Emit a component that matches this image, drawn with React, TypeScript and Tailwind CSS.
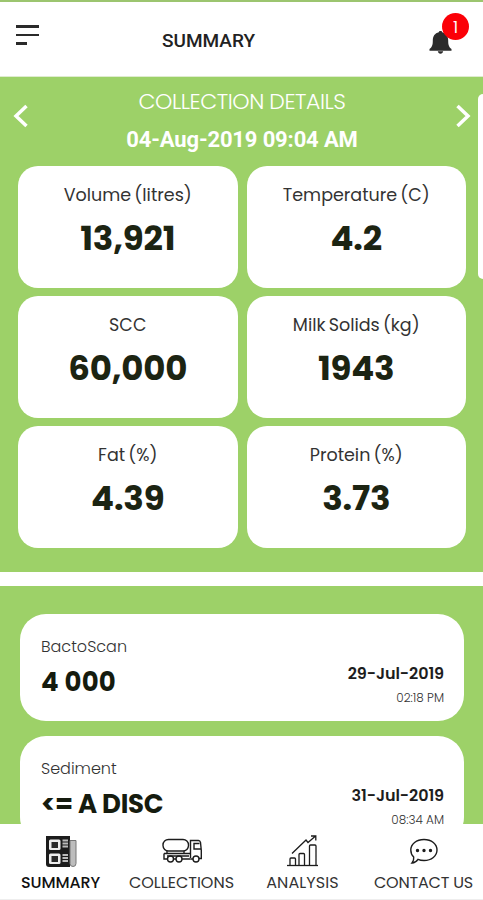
import type { JSX } from 'react';
import { twMerge } from 'tailwind-merge';

type Metric = {
	label: string;
	value: string;
};

const metrics: Metric[] = [
	{ label: 'Volume (litres)', value: '13,921' },
	{ label: 'Temperature (C)', value: '4.2' },
	{ label: 'SCC', value: '60,000' },
	{ label: 'Milk Solids (kg)', value: '1943' },
	{ label: 'Fat (%)', value: '4.39' },
	{ label: 'Protein (%)', value: '3.73' },
];

type TestResult = {
	name: string;
	value: string;
	date: string;
	time: string;
	valueClassName?: string;
};

const results: TestResult[] = [
	{
		name: 'BactoScan',
		value: '4 000',
		date: '29-Jul-2019',
		time: '02:18 PM',
		valueClassName: 'tracking-[0.2px]',
	},
	{
		name: 'Sediment',
		value: '<= A DISC',
		date: '31-Jul-2019',
		time: '08:34 AM',
		valueClassName: 'tracking-[-0.3px]',
	},
];

const SummaryIcon = () => (
	<svg width="31" height="31" viewBox="0 0 31 31" fill="none" className="ml-px">
		<path d="M0 0h24v31H3a3 3 0 0 1-3-3z" fill="#1c1c1c" />
		<rect x="3" y="3.5" width="11.5" height="10.5" rx="1.5" fill="#eee" />
		<rect x="5.500" y="6" width="6.500" height="6" fill="#2a2a2a" />
		<rect x="3" y="17.5" width="11.5" height="10.5" rx="1.5" fill="#eee" />
		<rect x="5.500" y="20" width="6.500" height="6" fill="#2a2a2a" />
		<path d="M16.500 4.500h5.500M16.500 7.500h5.500M16.500 10.500h5.500M16.500 19h5.500M16.500 22h5.500M16.500 25h5.500" stroke="#bbb" strokeWidth="2" />
		<path d="M24 4.500h6v23a3 3 0 0 1-6 0z" fill="#bdbdbd" stroke="#777" />
	</svg>
);

const TruckIcon = () => (
	<svg width="40" height="26" viewBox="0 0 40 26" fill="none" stroke="#1c1c1c" strokeWidth="1.4">
		<rect x="1" y="1.500" width="25.500" height="11.500" rx="5.500" />
		<path d="M2 15.500h26M28.500 20V2.500h8q1.500 0 2 2l.8 8v8H37M5 13v2.500M22 13v2.500M5.500 21H2v-5.500M28.500 21H31" />
		<path d="M37.500 5.500H32v5.500h7" />
		<circle cx="8.500" cy="21" r="3" />
		<circle cx="17" cy="21" r="3" />
		<circle cx="34" cy="21" r="3" />
		<path d="M11.500 21H14M20 21h8.500M5 18h22" />
	</svg>
);

const ChartIcon = () => (
	<svg width="31" height="32" viewBox="0 0 31 32" fill="none" stroke="#1c1c1c" strokeWidth="1.3">
		<path d="M0 30.500h31" />
		<path d="M3 30v-6q0-1 1-1h3.500q1 0 1 1v6M12 30V19.500q0-1 1-1h3.500q1 0 1 1V30M22.500 30V11q0-1 1-1H28q1 0 1 1v19" />
		<path d="M5 18.500 19 5l2 2.500 7-6M24 1h4.800v4.500" />
	</svg>
);

const ChatIcon = () => (
	<svg width="30" height="27" viewBox="0 0 30 27" fill="none" stroke="#1c1c1c" strokeWidth="1.400">
		<path d="M15 1.500c7.500 0 13 4.500 13 10.500s-5.500 10.500-13 10.500c-2.300 0-4.300-.4-6-1.200-1.500 2.200-3.500 3.500-6 3.700 1.400-1.700 2-3.600 1.700-6C2.800 17.200 1.800 14.800 1.800 12 1.800 6 7.500 1.500 15 1.500z" />
		<circle cx="8.500" cy="12.500" r="1" fill="#1c1c1c" />
		<circle cx="15" cy="12.500" r="1" fill="#1c1c1c" />
		<circle cx="21.500" cy="12.500" r="1" fill="#1c1c1c" />
	</svg>
);

const tabs = [
	{ label: 'SUMMARY', icon: <SummaryIcon />, className: 'font-medium text-[#111] tracking-[-0.1px]' },
	{ label: 'COLLECTIONS', icon: <TruckIcon />, className: '' },
	{ label: 'ANALYSIS', icon: <ChartIcon />, className: 'tracking-[0.1px]' },
	{ label: 'CONTACT US', icon: <ChatIcon />, className: 'tracking-[-0.2px]' },
];

const Header = () => (
	<header className="flex h-[77px] shrink-0 items-start border-t-2 border-b border-t-[#9cc56f] border-b-[#dfeccf] bg-white pr-[14px] pl-4">
		<button type="button" aria-label="Menu" className="mt-[23px] flex flex-col gap-[6px]">
			<span className="h-[2.500px] w-[23px] bg-[#2a2a2a]" />
			<span className="h-[2.500px] w-[23px] bg-[#2a2a2a]" />
			<span className="h-[2.500px] w-[11px] bg-[#2a2a2a]" />
		</button>
		<h1 className="mt-[26px] ml-[123px] font-[Roboto] text-[19px] leading-[26px] font-medium text-[#222]">
			SUMMARY
		</h1>
		<div className="relative mt-[11px] ml-auto h-10 w-10">
			<svg width="23" height="23" viewBox="0 0 23 23" fill="#2b2b2b" className="mt-[18px]">
				<path d="M11.500 0c1 0 1.600.5 1.700 1.300 3.900.9 6 4 6 8.200 0 4.500.6 6.300 3.300 8.500v1.700H.5V18c2.700-2.200 3.300-4 3.300-8.500 0-4.200 2.100-7.300 6-8.200C9.900.5 10.500 0 11.500 0zM8.800 20.200h5.400c-.3 1.500-1.300 2.500-2.700 2.500s-2.400-1-2.700-2.500z" />
			</svg>
			<span className="absolute top-0 right-0 flex size-[27px] items-center justify-center rounded-full bg-[#fb0007] pt-0.5 text-base text-white">
				1
			</span>
		</div>
	</header>
);

const MetricCard = ({ label, value }: Metric) => (
	<div className="flex h-[122px] flex-col items-center rounded-[20px] bg-white pt-[17px]">
		<span className="text-[17.5px] leading-6 text-[#333] [word-spacing:-1.5px]">{label}</span>
		<span className="mt-[11px] text-[34px] leading-10 font-bold tracking-[-0.2px] text-[#1c2412]">{value}</span>
	</div>
);

const CollectionDetails = () => (
	<section className="flex h-[495px] shrink-0 flex-col bg-[#9dd168] pt-3">
		<div className="relative flex h-[77px] shrink-0 items-start justify-between pr-3 pl-[13px]">
			<svg width="16" height="24" viewBox="0 0 16 24" fill="none" stroke="#fff" strokeWidth="3.500" className="mt-[15px]">
				<path d="M13.500 2 3 12l10.500 10" />
			</svg>
			<div className="flex flex-col items-center text-white">
				<h2 className="text-[22px] leading-[26px] font-light tracking-[-0.45px]">COLLECTION DETAILS</h2>
				<p className="mt-3 font-[Roboto] text-[22px] leading-[26px] font-bold tracking-[-0.15px]">
					04-Aug-2019 09:04 AM
				</p>
			</div>
			<svg width="16" height="24" viewBox="0 0 16 24" fill="none" stroke="#fff" strokeWidth="3.500" className="mt-[15px]">
				<path d="M2.500 2 13 12 2.500 22" />
			</svg>
			{/* edge of the next collection, peeking in from the right */}
			<div className="absolute top-[5px] right-0 h-[185px] w-[5px] rounded-l-[5px] bg-white" />
		</div>
		<div className="grid grid-cols-2 gap-x-[9px] gap-y-2 pr-[17px] pl-[18px]">
			{metrics.map((metric) => (
				<MetricCard key={metric.label} {...metric} />
			))}
		</div>
	</section>
);

const ResultCard = ({ name, value, date, time, valueClassName }: TestResult) => (
	<div className="flex h-[107px] shrink-0 items-start justify-between rounded-[26px] bg-white pr-5 pl-[21px]">
		<div className="flex flex-col pt-[21px]">
			<span className="text-base leading-6 font-light text-[#333]">{name}</span>
			<span className={twMerge('mt-[7px] text-[26px] leading-8 font-bold text-[#151b0e]', valueClassName)}>
				{value}
			</span>
		</div>
		<div className="flex flex-col items-end pt-12">
			<span className="text-base leading-6 font-semibold tracking-[-0.1px] text-[#1d1d1d]">{date}</span>
			<span className="mt-1 text-xs leading-4 font-light text-[#333]">{time}</span>
		</div>
	</div>
);

const TabBar = () => (
	<nav className="grid h-[76px] w-[484px] shrink-0 grid-cols-4 border-b border-[#eee] bg-white">
		{tabs.map((tab) => (
			<button type="button" key={tab.label} className="flex flex-col items-center pt-[9px]">
				<span className="flex h-9 items-center justify-center">{tab.icon}</span>
				<span className={twMerge('mt-1 text-base leading-5 whitespace-nowrap text-[#333]', tab.className)}>
					{tab.label}
				</span>
			</button>
		))}
	</nav>
);

export default function App(): JSX.Element {
	return (
		<div className="flex h-[900px] w-[483px] flex-col overflow-hidden bg-white font-[Poppins,Inter,sans-serif]">
			<Header />
			<CollectionDetails />
			<section className="mt-[14px] flex h-[238px] shrink-0 flex-col gap-[15px] overflow-hidden bg-[#9dd168] pt-7 pr-[19px] pl-5">
				{results.map((result) => (
					<ResultCard key={result.name} {...result} />
				))}
			</section>
			<TabBar />
		</div>
	);
}
